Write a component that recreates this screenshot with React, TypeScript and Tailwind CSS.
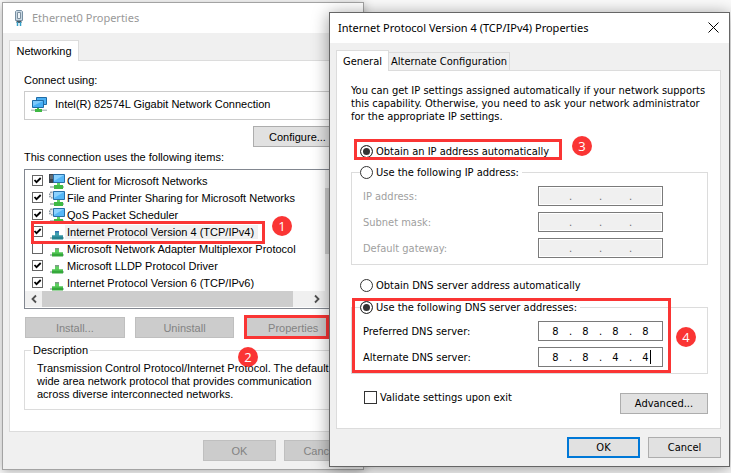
import React, { useState } from 'react';
import clsx from 'clsx';

type IconKind = 'client' | 'service' | 'protocol' | 'selected';

interface NetworkItem {
  id: string;
  label: string;
  icon: IconKind;
  checked: boolean;
}

const initialItems: NetworkItem[] = [
  { id: 'client', label: 'Client for Microsoft Networks', icon: 'client', checked: true },
  { id: 'sharing', label: 'File and Printer Sharing for Microsoft Networks', icon: 'service', checked: true },
  { id: 'qos', label: 'QoS Packet Scheduler', icon: 'service', checked: true },
  { id: 'ipv4', label: 'Internet Protocol Version 4 (TCP/IPv4)', icon: 'selected', checked: true },
  { id: 'multiplexor', label: 'Microsoft Network Adapter Multiplexor Protocol', icon: 'protocol', checked: false },
  { id: 'lldp', label: 'Microsoft LLDP Protocol Driver', icon: 'protocol', checked: true },
  { id: 'ipv6', label: 'Internet Protocol Version 6 (TCP/IPv6)', icon: 'protocol', checked: true },
];

const ItemIcon: React.FC<{ kind: IconKind }> = ({ kind }) => {
  if (kind === 'protocol' || kind === 'selected') {
    const dark = kind === 'selected' ? '#26838f' : '#35a83a';
    const light = kind === 'selected' ? '#3f9fb0' : '#5fd160';
    return (
      <svg viewBox="0 0 16 16" className="h-4 w-4 shrink-0" aria-hidden="true">
        <path d="M1 13h14v2H1z" fill="#b9c4c4" />
        <path d="M6 7h4v5H6z" fill={light} />
        <path d="M6 7h4v1.500H6z" fill={kind === 'selected' ? '#3572b0' : '#7f9a86'} />
        <path d="M3 11.500h11v4H3z" fill={dark} />
        <path d="M3 11.500h11v1H3z" fill={light} />
      </svg>
    );
  }
  return (
    <svg viewBox="0 0 16 16" className="h-4 w-4 shrink-0" aria-hidden="true">
      {kind === 'client' ? (
        <>
          <path d="M0 1h5v9H0z" fill="#3d444b" />
          <path d="M1 3h3M1 5h3" stroke="#8b949c" strokeWidth="1" />
        </>
      ) : (
        <circle cx="3.500" cy="5" r="3" fill="#e4e8ec" stroke="#8a949d" strokeWidth="1.500" strokeDasharray="1.500 0.800" />
      )}
      <path d="M4.500 1.500h11v8h-11z" fill="#56b7f7" stroke="#2a6fa8" />
      <path d="M5 2h10L5 8z" fill="#8bd2ff" />
      <path d="M1 13h14v2H1z" fill="#b9c4c4" />
      <path d="M8 10h3v3H8z" fill="#5fd160" />
      <path d="M5 12h9v4H5z" fill="#3fb944" />
    </svg>
  );
};

const AdapterIcon: React.FC = () => (
  <svg viewBox="0 0 16 16" className="h-4 w-4 shrink-0" aria-hidden="true">
    <path d="M5.500 1.500h10v7h-10z" fill="#4db0f2" stroke="#1f6ba6" />
    <path d="M1.500 4.500h11v7h-11z" fill="#45aef5" stroke="#1f6ba6" />
    <path d="M2 5h10L2 10z" fill="#7cc9fb" />
    <path d="M0 13.500h16v1.500H0z" fill="#b9c4c4" />
    <path d="M6 12h2v2H6zM4 13h7v3H4z" fill="#3fb944" />
  </svg>
);

const PlugIcon: React.FC = () => (
  <svg viewBox="0 0 8 16" className="h-4 w-2 shrink-0" aria-hidden="true">
    <path d="M.5 1.500l1-1h5l1 1v9h-7z" fill="#c9d8e4" stroke="#7890a3" />
    <path d="M2.500 2.500h3v6h-3z" fill="#eef4f8" stroke="#7c8f9e" />
    <path d="M1.500 11h5v2h-5z" fill="#4a5b66" />
    <path d="M2.500 12v4M5.500 12v4" stroke="#35a0c8" strokeWidth="1.500" />
  </svg>
);

const CloseButton: React.FC<{ className?: string }> = ({ className }) => (
  <button type="button" aria-label="Close" className={className}>
    <svg viewBox="0 0 11 11" className="h-[11px] w-[11px]" fill="none" stroke="currentColor">
      <path d="M.5.5l10 10M10.500.5l-10 10" />
    </svg>
  </button>
);

// Numbered step marker
const Badge: React.FC<{ n: number; className: string }> = ({ n, className }) => (
  <span
    className={clsx(
      "absolute z-20 flex h-5 w-5 items-center justify-center rounded-full bg-[#fa3534] font-['Open_Sans',sans-serif] text-[13px] leading-5 text-white",
      className,
    )}
  >
    {n}
  </span>
);

const Highlight: React.FC<{ className: string }> = ({ className }) => (
  <span className={clsx('pointer-events-none absolute z-10 border-3 border-[#fa3534]', className)} />
);

const CheckBox: React.FC<{ id: string; checked: boolean; onChange: () => void; small?: boolean }> = ({
  id,
  checked,
  onChange,
  small,
}) => (
  <span className={clsx('relative flex shrink-0', small ? 'h-[11px] w-[11px]' : 'h-[13px] w-[13px]')}>
    <input
      id={id}
      type="checkbox"
      checked={checked}
      onChange={onChange}
      className={clsx('h-full w-full appearance-none border bg-white', small ? 'border-[#666]' : 'border-[#333]')}
    />
    {checked && (
      <svg viewBox="0 0 11 11" className="pointer-events-none absolute inset-0 h-full w-full" aria-hidden="true">
        <path d="M2.500 5l2 2.200L8.700 3" fill="none" stroke="#000" strokeWidth="1.800" />
      </svg>
    )}
  </span>
);

interface RadioProps {
  name: string;
  label: string;
  checked: boolean;
  onChange: () => void;
}

const Radio: React.FC<RadioProps> = ({ name, label, checked, onChange }) => (
  <label className="flex h-[14px] items-center gap-[3px] whitespace-nowrap">
    <input
      type="radio"
      name={name}
      checked={checked}
      onChange={onChange}
      className="h-[13px] w-[13px] appearance-none rounded-full border border-[#333] bg-white checked:bg-[#333] checked:shadow-[inset_0_0_0_2px_#fff]"
    />
    {label}
  </label>
);

interface AddressRowProps {
  id: string;
  label: string;
  octets: string[];
  disabled?: boolean;
  caret?: boolean;
}

const AddressRow: React.FC<AddressRowProps> = ({ id, label, octets, disabled, caret }) => (
  <div className={clsx('flex h-5 items-center justify-between', disabled && 'text-[#a0a0a0]')}>
    <label htmlFor={`${id}-0`}>{label}</label>
    <div
      className={clsx(
        'flex h-5 w-[125px] items-center border border-[#7a7a7a] pl-[3px]',
        disabled ? 'bg-[#f0f0f0] shadow-[inset_0_0_0_1px_#fff]' : 'bg-white',
      )}
    >
      {octets.map((octet, i) => (
        <React.Fragment key={i}>
          {i > 0 && <span className={clsx('w-[3px]', disabled && 'text-[#6d6d6d]')}>.</span>}
          <span className="relative flex">
            <input
              id={`${id}-${i}`}
              aria-label={i > 0 ? `${label} ${i + 1}` : undefined}
              defaultValue={octet}
              disabled={disabled}
              className="h-4 w-[27px] bg-transparent text-center outline-none"
            />
            {caret && i === 3 && <span className="absolute top-px right-2 h-[14px] w-px bg-black" />}
          </span>
        </React.Fragment>
      ))}
    </div>
  </div>
);

const grayButton = 'h-[21px] border border-[#bfbfbf] bg-[#cccccc] text-[#838383]';
const button = 'h-[21px] border border-[#adadad] bg-[#e1e1e1]';

const EthernetWindow: React.FC = () => {
  const [items, setItems] = useState(initialItems);

  const toggle = (id: string) =>
    setItems(items.map((item) => (item.id === id ? { ...item, checked: !item.checked } : item)));

  return (
    <section className="absolute top-0.5 right-[367px] left-0.5 border border-[#a3a3a3] bg-[#f0f0f0] font-['Liberation_Sans',sans-serif] text-[11px] leading-[14px] text-black shadow-[0_2px_10px_rgba(0,0,0,0.3)]">
      <header className="flex h-[30px] items-center bg-white pr-2 pl-3 text-[#999]">
        <PlugIcon />
        <h1 className="ml-[9px] flex-1 font-['Noto_Sans',sans-serif] text-[11px]">Ethernet0 Properties</h1>
        <CloseButton />
      </header>

      <div className="pt-[7px] pr-[6px] pb-2 pl-[6px]">
        <div className="relative z-10 -mb-px flex" role="tablist">
          <button type="button" role="tab" aria-selected="true" className="h-[21px] w-[70px] border border-b-0 border-[#dcdcdc] bg-white">
            Networking
          </button>
        </div>

        <div className="border border-[#dcdcdc] bg-white px-[14px] pt-3 pb-[21px]">
          <p>Connect using:</p>
          <div className="mt-1 flex h-[29px] items-center gap-2 border border-[#ccc] pb-1 pl-[6px]">
            <AdapterIcon />
            <span className="whitespace-nowrap">Intel(R) 82574L Gigabit Network Connection</span>
          </div>
          <div className="mt-[6px] flex justify-end">
            <button type="button" className={clsx(button, 'w-[89px]')}>Configure...</button>
          </div>

          <p className="mt-[3px]">This connection uses the following items:</p>
          <div className="mt-[5px] border border-[#828790] pb-px">
            <div className="flex">
              <ul className="min-w-0 flex-1 pt-0.5">
                {items.map((item) => (
                  <li key={item.id} className="relative flex h-[17px] items-center pl-[7px]">
                    <CheckBox id={item.id} checked={item.checked} onChange={() => toggle(item.id)} small />
                    <span className="ml-[6px] flex"><ItemIcon kind={item.icon} /></span>
                    <label
                      htmlFor={item.id}
                      className={clsx('pl-0.5 whitespace-nowrap', item.id === 'ipv4' && 'bg-[#f0f0f0] pr-1')}
                    >
                      {item.label}
                    </label>
                    {item.id === 'ipv4' && (
                      <>
                        <Highlight className="-top-0.5 left-[6px] h-[23px] w-[234px]" />
                        <Badge n={1} className="-top-[7px] left-[247px]" />
                      </>
                    )}
                  </li>
                ))}
              </ul>
              <div className="w-4 bg-[#f0f0f0] pt-[18px]">
                <div className="h-[66px] bg-[#cdcdcd]" />
              </div>
            </div>
            <div className="flex h-4 items-center bg-[#f0f0f0] pr-4 pl-px text-[#505050]">
              <svg viewBox="0 0 16 16" className="h-4 w-4" fill="none" stroke="currentColor" strokeWidth="1.800" aria-hidden="true">
                <path d="M10 4.500L6.500 8l3.500 3.500" />
              </svg>
              <div className="mr-[16px] h-4 flex-1 bg-[#cdcdcd]" />
              <svg viewBox="0 0 16 16" className="h-4 w-4" fill="none" stroke="currentColor" strokeWidth="1.800" aria-hidden="true">
                <path d="M6 4.500L9.500 8 6 11.500" />
              </svg>
            </div>
          </div>

          <div className="mt-2 flex gap-[10px] pl-px">
            <button type="button" className={clsx(grayButton, 'flex-1')}>Install...</button>
            <button type="button" className={clsx(grayButton, 'flex-1')}>Uninstall</button>
            <div className="relative flex flex-1">
              <button type="button" className={clsx(grayButton, 'flex-1')}>Properties</button>
              <Highlight className="-top-0.5 left-0 h-6 w-[85px]" />
            </div>
          </div>

          <div className="relative mt-[5px]">
            <fieldset className="border border-[#dcdcdc] px-3 pb-2">
              <legend className="-ml-[6px] px-0.5">Description</legend>
              <p className="mt-[5px] leading-[13px] whitespace-nowrap">
                Transmission Control Protocol/Internet Protocol. The default
                <br />
                wide area network protocol that provides communication
                <br />
                across diverse interconnected networks.
              </p>
            </fieldset>
            <Badge n={2} className="top-1 left-[214px]" />
          </div>
        </div>

        <div className="mt-2 flex justify-end gap-2">
          <button type="button" className={clsx(grayButton, 'w-[73px]')}>OK</button>
          <button type="button" className={clsx(grayButton, 'w-[73px]')}>Cancel</button>
        </div>
      </div>
    </section>
  );
};

const Ipv4Window: React.FC = () => {
  const [autoIp, setAutoIp] = useState(true);
  const [autoDns, setAutoDns] = useState(false);
  const [validate, setValidate] = useState(false);

  return (
    <section className="absolute top-3 right-px left-[329px] z-30 border border-[#666] bg-[#f0f0f0] font-['DejaVu_Sans_Condensed','DejaVu_Sans',sans-serif] text-[11px] leading-[13px] text-black shadow-[0_2px_16px_rgba(0,0,0,0.4)]">
      <header className="flex h-[30px] items-center justify-between bg-white pr-[10px] pb-0.5 pl-2">
        <h1 className="font-['Noto_Sans',sans-serif] text-[11px]">Internet Protocol Version 4 (TCP/IPv4) Properties</h1>
        <CloseButton />
      </header>

      <div className="pt-[7px] pr-2 pb-2 pl-[6px]">
        <div className="relative z-10 -mb-px flex items-end" role="tablist">
          <button type="button" role="tab" aria-selected="true" className="h-[21px] w-[53px] border border-b-0 border-[#dcdcdc] bg-white">
            General
          </button>
          <button type="button" role="tab" aria-selected="false" className="mb-px h-[18px] w-[121px] border border-b-0 border-l-0 border-[#dcdcdc] whitespace-nowrap">
            Alternate Configuration
          </button>
        </div>

        <div className="border border-[#dcdcdc] bg-white pt-[13px] pr-3 pb-[14px] pl-[14px]">
          <p className="whitespace-nowrap">
            You can get IP settings assigned automatically if your network supports
            <br />
            this capability. Otherwise, you need to ask your network administrator
            <br />
            for the appropriate IP settings.
          </p>

          <div className="relative mt-[21px] flex pl-[9px]">
            <Radio name="ip" label="Obtain an IP address automatically" checked={autoIp} onChange={() => setAutoIp(true)} />
            <Highlight className="-top-[5px] left-[3px] h-[21px] w-[208px]" />
            <Badge n={3} className="-top-2 left-[221px]" />
          </div>

          <fieldset className="mt-[7px] border border-[#dcdcdc] pr-[44px] pb-[6px] pl-[11px]">
            <legend className="-ml-[3px] pr-[3px]">
              <Radio name="ip" label="Use the following IP address:" checked={!autoIp} onChange={() => setAutoIp(false)} />
            </legend>
            <div className="mt-[7px] flex flex-col gap-[6px]">
              <AddressRow id="ip-address" label="IP address:" octets={['', '', '', '']} disabled={autoIp} />
              <AddressRow id="subnet-mask" label="Subnet mask:" octets={['', '', '', '']} disabled={autoIp} />
              <AddressRow id="gateway" label="Default gateway:" octets={['', '', '', '']} disabled={autoIp} />
            </div>
          </fieldset>

          <div className="mt-[13px] flex pl-[9px]">
            <Radio name="dns" label="Obtain DNS server address automatically" checked={autoDns} onChange={() => setAutoDns(true)} />
          </div>

          <div className="relative mt-2">
            <fieldset className="border border-[#dcdcdc] pr-[44px] pb-[6px] pl-[11px]">
              <legend className="-ml-[3px] pr-[3px]">
                <Radio name="dns" label="Use the following DNS server addresses:" checked={!autoDns} onChange={() => setAutoDns(false)} />
              </legend>
              <div className="mt-[7px] flex flex-col gap-[6px]">
                <AddressRow id="dns-preferred" label="Preferred DNS server:" octets={['8', '8', '8', '8']} disabled={autoDns} />
                <AddressRow id="dns-alternate" label="Alternate DNS server:" octets={['8', '8', '4', '4']} disabled={autoDns} caret />
              </div>
            </fieldset>
            <Highlight className="-top-0.5 left-px h-[75px] w-[319px]" />
            <Badge n={4} className="top-[27px] left-[325px]" />
          </div>

          <div className="mt-[17px] flex items-start justify-between pl-[13px]">
            <div className="flex items-center gap-[3px]">
              <CheckBox id="validate" checked={validate} onChange={() => setValidate(!validate)} />
              <label htmlFor="validate">Validate settings upon exit</label>
            </div>
            <button type="button" className={clsx(button, 'mt-0.5 w-[88px]')}>Advanced...</button>
          </div>
        </div>

        <div className="mt-2 flex justify-end gap-2">
          <button type="button" className="h-[21px] w-[73px] border-2 border-[#0078d7] bg-[#e1e1e1]">OK</button>
          <button type="button" className={clsx(button, 'w-[73px]')}>Cancel</button>
        </div>
      </div>
    </section>
  );
};

const App: React.FC = () => (
  <main className="relative min-h-screen overflow-hidden bg-[#fbfbfb]">
    <EthernetWindow />
    <Ipv4Window />
  </main>
);

export default App;
